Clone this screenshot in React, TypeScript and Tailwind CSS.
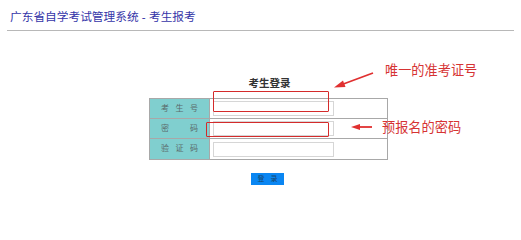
import React from "react";

const font = { fontFamily: '"Liberation Sans", "Noto Sans CJK SC", sans-serif' };

function Row({ label, last }: { label: React.ReactNode; last?: boolean }) {
  return (
    <div className={`flex h-[20px] ${last ? "" : "border-b border-[#a8a8a8]"}`}>
      <div className="w-[60px] shrink-0 bg-[#80cfcf] border-r border-[#a8a8a8] flex items-center text-[8px] text-[#5a6a6a]">
        {label}
      </div>
      <div className="flex-1 flex items-center pl-[3px]">
        <div className="w-[121px] h-[15px] border border-[#d6d6d6] bg-white" />
      </div>
    </div>
  );
}

export default function App() {
  return (
    <div className="relative w-[521px] h-[217px] bg-white overflow-hidden" style={font}>
      <div className="mx-[7px] h-[31px] border-b border-[#b8b8b8] pl-[3px] pt-[9px] text-[11.7px] leading-[15px] text-[#3535a8]">
        广东省自学考试管理系统 - 考生报考
      </div>
      <div className="ml-[149px] w-[239px] mt-[46px]">
        <div className="text-center text-[10.5px] font-bold leading-[13px] text-[#333] pl-[2px]">考生登录</div>
        <div className="mt-[8px] border border-[#a8a8a8]">
          <Row label={<div className="w-full flex justify-between px-[11px]"><span>考</span><span>生</span><span>号</span></div>} />
          <Row label={<div className="w-full flex justify-between px-[11px]"><span>密</span><span>码</span></div>} />
          <Row last label={<div className="w-full flex justify-between px-[11px]"><span>验</span><span>证</span><span>码</span></div>} />
        </div>
        <div className="mt-[13px] flex justify-center pr-[2px]">
          <div className="w-[33px] h-[12px] bg-[#0a86f2] flex items-center justify-center gap-[6px] text-[7px] text-[#17466f]">
            <span>登</span><span>录</span>
          </div>
        </div>
      </div>

      {/* annotation boxes */}
      <div className="absolute left-[213px] top-[91px] w-[116px] h-[21px] border-[1.5px] border-[#d42b2b] rounded-[1px]" />
      <div className="absolute left-[206px] top-[122px] w-[123px] h-[15px] border-[1.5px] border-[#d42b2b] rounded-[1px]" />

      <svg className="absolute left-0 top-0" width="521" height="217">
        <line x1="373" y1="73" x2="342" y2="84.5" stroke="#e03030" strokeWidth="1.8" />
        <polygon points="334,87.5 343,80.5 345.5,87" fill="#e03030" />
        <line x1="372" y1="127" x2="359" y2="127" stroke="#e03030" strokeWidth="1.8" />
        <polygon points="351,127 360,124 360,130" fill="#e03030" />
      </svg>

      <div className="absolute left-[385px] top-[63px] text-[13.2px] leading-[16px] text-[#d63333]">唯一的准考证号</div>
      <div className="absolute left-[382px] top-[120px] text-[13.2px] leading-[16px] text-[#d63333]">预报名的密码</div>
    </div>
  );
}
